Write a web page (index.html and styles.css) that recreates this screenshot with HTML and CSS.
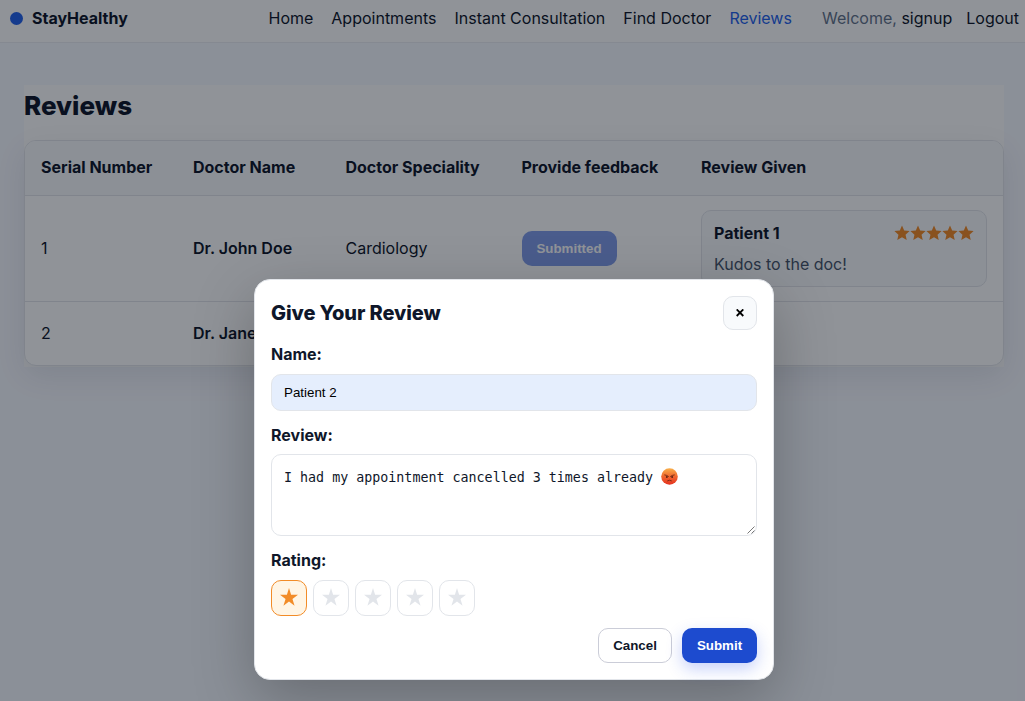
FILE: index.html
```
<!DOCTYPE html>
<html lang="en">
<head>
<meta charset="utf-8">
<title>StayHealthy</title>
<link rel="stylesheet" href="styles.css">
</head>
<body>
<svg class="defs" width="0" height="0" aria-hidden="true">
  <symbol id="star" viewBox="0 0 24 24"><path d="M12 .7l3.3 7.5 8.1.8-6.1 5.5 1.8 8.1L12 18.5l-7.1 4.1 1.8-8.1L.6 9l8.1-.8z"/></symbol>
  <symbol id="star-thin" viewBox="0 0 24 24"><path d="M12 0l2.8 9.1H24l-7.4 5.5 2.8 9L12 18.1l-7.4 5.5 2.8-9L0 9.100h9.200z"/></symbol>
</svg>
<header class="nav">
  <div class="brand"><span class="brand-dot"></span>StayHealthy</div>
  <nav class="links">
    <a>Home</a><a>Appointments</a><a>Instant Consultation</a><a>Find Doctor</a><a class="active">Reviews</a>
  </nav>
  <div class="user"><span><span class="muted">Welcome,</span> signup</span><a>Logout</a></div>
</header>
<main class="page">
  <h1>Reviews</h1>
  <div class="table-card">
    <table>
      <colgroup><col class="c1"><col class="c2"><col class="c3"><col class="c4"><col></colgroup>
      <thead><tr><th>Serial Number</th><th>Doctor Name</th><th>Doctor Speciality</th><th>Provide feedback</th><th>Review Given</th></tr></thead>
      <tbody>
        <tr class="tall">
          <td class="text">1</td><td class="text doctor">Dr. John Doe</td><td class="text">Cardiology</td>
          <td><button class="btn submitted">Submitted</button></td>
          <td><div class="review">
            <div class="review-head"><strong>Patient 1</strong><span class="stars"><svg><use href="#star"/></svg><svg><use href="#star"/></svg><svg><use href="#star"/></svg><svg><use href="#star"/></svg><svg><use href="#star"/></svg></span></div>
            <p>Kudos to the doc!</p>
          </div></td>
        </tr>
        <tr class="short"><td class="text">2</td><td class="text doctor">Dr. Jane</td><td></td><td></td><td></td></tr>
      </tbody>
    </table>
  </div>
</main>
<div class="overlay">
  <section class="modal">
    <div class="modal-head"><h2>Give Your Review</h2><button class="close" aria-label="Close"><svg width="8" height="8" viewBox="0 0 8 8"><path d="M.7.4l6.600 6.600M7.300.4L.7 7"/></svg></button></div>
    <div class="label">Name:</div>
    <div class="input">Patient 2</div>
    <div class="label tight">Review:</div>
    <div class="textarea"><span>I had my appointment cancelled 3 times already</span>
      <svg class="angry" viewBox="0 0 16 16">
        <defs><linearGradient id="face" x1="0" y1="0" x2="0" y2="1"><stop offset="0" stop-color="#f9b04a"/><stop offset=".5" stop-color="#f0672f"/><stop offset="1" stop-color="#e4301f"/></linearGradient></defs>
        <circle cx="8" cy="8" r="7.800" fill="url(#face)"/>
        <path d="M3.500 6.500q2 .2 3.500 1.400M12.500 6.500q-2 .2-3.500 1.400M6.200 12q1.800-1.200 3.600 0" fill="none" stroke="#6b2412" stroke-width=".8" stroke-linecap="round"/>
        <circle cx="5.500" cy="8.500" r=".9" fill="#5b2014"/><circle cx="10.500" cy="8.500" r=".9" fill="#5b2014"/>
      </svg>
      <svg class="grip" viewBox="0 0 8 8"><path d="M.5 7.500l7-7M4.500 7.500l3-3"/></svg>
    </div>
    <div class="label">Rating:</div>
    <div class="rating">
      <button class="rate on"><svg><use href="#star-thin"/></svg></button><button class="rate"><svg><use href="#star-thin"/></svg></button><button class="rate"><svg><use href="#star-thin"/></svg></button><button class="rate"><svg><use href="#star-thin"/></svg></button><button class="rate"><svg><use href="#star-thin"/></svg></button>
    </div>
    <div class="actions"><button class="btn cancel">Cancel</button><button class="btn submit">Submit</button></div>
  </section>
</div>
</body>
</html>
```
FILE: styles.css
```
* { box-sizing: border-box; }
body { margin: 0; height: 701px; overflow: hidden; background: #f7f9ff; color: #0f172a; font: 16px/24px Inter, sans-serif; }
.defs { position: absolute; }
h1, h2, p { margin: 0; }
button { font-family: "Liberation Sans", Arial, sans-serif; padding: 0; }
.nav { height: 43px; background: #fff; border-bottom: 1px solid #eceef2; display: flex; align-items: center; padding: 0 6px 6px 10px; white-space: nowrap; }
.brand { display: flex; align-items: center; gap: 9px; font-weight: 700; width: 258.500px; }
.brand-dot { width: 13px; height: 13px; border-radius: 50%; background: #2563eb; }
.links { display: flex; gap: 18px; }
.links .active { color: #2563eb; }
.user { display: flex; gap: 14px; margin-left: auto; }
.muted { color: #64748b; }
.page { width: 980px; height: 282px; margin: 42px 0 0 24px; background: #fff; }
h1 { height: 55px; padding-top: 1px; font-size: 26px; line-height: 40px; font-weight: 800; }
.table-card { height: 226px; border: 1px solid #e2e5ea; border-radius: 12px; overflow: hidden; background: #fff; box-shadow: 0 10px 30px rgba(15,23,42,.09); }
table { width: 100%; table-layout: fixed; border-collapse: separate; border-spacing: 0; }
.c1 { width: 152px; } .c2 { width: 152.500px; } .c3 { width: 176px; } .c4 { width: 179.500px; }
th, td { padding: 0 16px; text-align: left; vertical-align: middle; white-space: nowrap; }
th { height: 55px; padding-bottom: 2px; font-weight: 700; background: #f8fafc; border-bottom: 1px solid #e2e5ea; }
.tall td { height: 106px; border-bottom: 1px solid #e2e5ea; }
.short td { height: 63px; }
td.text { padding-bottom: 2px; }
.doctor { font-weight: 600; }
.btn { height: 35px; border: 0; border-radius: 10px; font-size: 13.333px; font-weight: 700; }
.submitted { display: block; width: 95px; color: #fff; background: #1d4ed8; opacity: .55; }
.review { width: 286px; height: 77px; padding: 10px 12px; border: 1px solid #e2e5ea; border-radius: 10px; background: #f8fafc; }
.review-head { display: flex; justify-content: space-between; align-items: center; }
.review p { margin-top: 7px; color: #475569; }
.stars { display: flex; }
.stars svg { width: 16px; height: 16px; fill: #f28c28; }
.overlay { position: absolute; inset: 0; display: flex; justify-content: center; align-items: flex-start; padding: 279px 0 0 3px; background: rgba(2,8,20,.44); }
.modal { width: 520px; height: 401px; padding: 16px; background: #fff; border: 1px solid #e2e5ea; border-radius: 16px; box-shadow: 0 20px 60px rgba(0,0,0,.25); }
.modal-head { height: 34px; display: flex; align-items: center; justify-content: space-between; }
h2 { font-size: 20px; line-height: 30px; font-weight: 800; letter-spacing: -.1px; }
.close { width: 34px; height: 34px; display: grid; place-items: center; background: #f8fafc; border: 1px solid #e2e5ea; border-radius: 10px; }
.close path { stroke: #000; stroke-width: 1.8; fill: none; }
.label { font-weight: 700; margin: 12px 0 8px; }
.label.tight { margin-bottom: 7px; }
.input { height: 37px; padding: 0 12px; border: 1px solid #e2e5ea; border-radius: 10px; background: #e5eefd; color: #000; font: 13.333px/35px "Liberation Sans", Arial, sans-serif; }
.textarea { position: relative; height: 82px; padding: 14px 12px; display: flex; gap: 8px; border: 1px solid #e2e5ea; border-radius: 10px; font: 13.333px/18px "DejaVu Sans Mono", monospace; }
.angry { width: 17px; height: 17px; margin-top: -1px; }
.grip { position: absolute; right: 1px; bottom: 1px; width: 8px; height: 8px; fill: none; stroke: #555; stroke-width: .8; }
.rating { display: flex; gap: 6px; }
.rate { width: 36px; height: 36px; display: grid; place-items: center; padding-bottom: 2px; border: 1px solid #e2e5ea; border-radius: 10px; background: #fff; color: #e2e5ea; }
.rate svg { width: 18px; height: 18px; fill: currentColor; }
.rate.on { color: #f28c28; border-color: #f28c28; background: #fff5e5; }
.actions { display: flex; justify-content: flex-end; gap: 10px; margin-top: 12px; }
.cancel { width: 74px; color: #0f172a; background: #fff; border: 1px solid #cbcdd8; }
.submit { width: 75px; color: #fff; background: #1d4bcf; box-shadow: 0 6px 16px rgba(37,75,235,.25); }
```
